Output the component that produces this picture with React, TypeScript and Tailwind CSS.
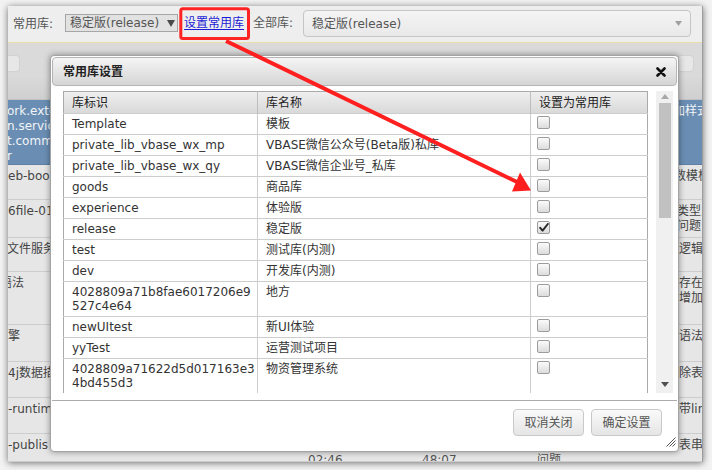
import React from "react";

type Row = { id: string[]; name: string; checked?: boolean };

const rows: Row[] = [
  { id: ["Template"], name: "模板" },
  { id: ["private_lib_vbase_wx_mp"], name: "VBASE微信公众号(Beta版)私库" },
  { id: ["private_lib_vbase_wx_qy"], name: "VBASE微信企业号_私库" },
  { id: ["goods"], name: "商品库" },
  { id: ["experience"], name: "体验版" },
  { id: ["release"], name: "稳定版", checked: true },
  { id: ["test"], name: "测试库(内测)" },
  { id: ["dev"], name: "开发库(内测)" },
  { id: ["4028809a71b8fae6017206e9", "527c4e64"], name: "地方" },
  { id: ["newUItest"], name: "新UI体验" },
  { id: ["yyTest"], name: "运营测试项目" },
  { id: ["4028809a71622d5d017163e3", "4bd455d3"], name: "物资管理系统" },
  { id: ["demo"], name: "演示库" },
];

type BgRow = {
  h: string;
  blue?: boolean;
  left: string[];
  leftShift?: string;
  right: string[];
  rightShift?: string;
  mid?: boolean;
};

const bgRows: BgRow[] = [
  { h: "h-[65px]", blue: true, left: ["ork.exte", "n.servic", "t.comm", "r"], leftShift: "ml-[-1px]", right: ["加样式"], rightShift: "ml-[-6px]" },
  { h: "h-[35px]", left: ["eb-boo"], right: ["数模板"], rightShift: "ml-[-5px]" },
  { h: "h-[38px]", left: ["6file-01"], right: ["类型,", "问题"], rightShift: "ml-[-2px]" },
  { h: "h-[34px]", left: ["文件服务"], leftShift: "ml-[-1px]", right: ["逻辑"] },
  { h: "h-[53px]", left: ["语法"], leftShift: "ml-[-8px]", right: ["存在", "增加"] },
  { h: "h-[37px]", left: ["擎"], right: ["语法"] },
  { h: "h-[36px]", left: ["4j数据描"], right: ["除表"] },
  { h: "h-[36px]", left: ["-runtim"], right: ["带lin"] },
  { h: "h-[28px]", left: ["-publis"], right: ["表串"], mid: true },
];

function Checkbox({ checked }: { checked?: boolean }) {
  return (
    <div className="mt-[-1px] ml-[-1px] w-[13px] h-[13px] rounded-[2px] border border-[#9c9c9c] bg-gradient-to-b from-[#fbfbfb] to-[#dcdcdc] flex items-center justify-center">
      {checked && (
        <svg width="10" height="9" viewBox="0 0 10 9">
          <path d="M1.2 4.8 L3.6 7.6 L8.8 1" fill="none" stroke="#2b2b2b" strokeWidth="2" strokeLinecap="round" strokeLinejoin="round" />
        </svg>
      )}
    </div>
  );
}

export default function App() {
  return (
    <div className="relative w-[712px] h-[470px] overflow-hidden bg-[#f3f3f3] pl-[8px] pt-[6px] font-['DejaVu_Sans','Noto_Sans_CJK_SC',sans-serif] text-[12px]">
      <div className="relative w-[695px] h-[456px] overflow-hidden bg-[#e6e6e6] border-r border-[#9d9d9d] shadow-[0_1px_7px_rgba(0,0,0,0.55)] flex flex-col">
        {/* toolbar */}
        <div className="h-[37px] shrink-0 bg-[#eeeeee] border-b border-[#eadfac] flex items-center pl-[5px] text-[#555] whitespace-nowrap">
          <span className="shrink-0">常用库:</span>
          <div className="ml-[12px] shrink-0 w-[113px] h-[18px] mt-[-2px] border border-[#a6a6a6] bg-[#e2e2e2] flex items-center pl-[4px] overflow-hidden">
            <span className="text-[#555] whitespace-nowrap">稳定版(release)</span>
            <svg className="ml-[8px] shrink-0" width="8" height="7" viewBox="0 0 8 7">
              <path d="M0 0 H8 L4 7 Z" fill="#4a4a4a" />
            </svg>
          </div>
          <span className="ml-[6px] mt-[-2px] shrink-0 text-[#1c1cd6] underline underline-offset-[2px]">设置常用库</span>
          <span className="ml-[9px] mt-[-2px] shrink-0">全部库:</span>
          <div className="ml-[10px] shrink-0 w-[388px] h-[27px] mt-[-1px] rounded-[4px] border border-[#c5c5c5] bg-gradient-to-b from-[#f4f4f4] to-[#e9e9e9] flex items-center justify-between pl-[8px] pr-[8px]">
            <span className="text-[#555]">稳定版(release)</span>
            <svg width="7" height="5" viewBox="0 0 7 5">
              <path d="M0 0 H7 L3.5 5 Z" fill="#a0a0a0" />
            </svg>
          </div>
        </div>
        {/* toolbar 2 */}
        <div className="h-[35px] shrink-0 bg-[#dadada] flex items-start justify-between pt-[12px]">
          <div className="w-[12px] h-[17px] rounded-r-[4px] bg-[#e7e7e7] border border-l-0 border-[#d2d2d2]" />
          <div className="w-[17px] h-[17px] mr-[8px] rounded-[4px] bg-[#e7e7e7] border border-[#d2d2d2]" />
        </div>
        {/* header */}
        <div className="h-[22px] shrink-0 bg-gradient-to-b from-[#d9d9d9] to-[#cfcfcf] border-b border-[#c3c3c3]" />
        {/* rows */}
        {bgRows.map((r, i) => (
          <div
            key={i}
            className={`${r.h} shrink-0 grid grid-cols-[42px_621px_32px] border-b ${r.blue ? "bg-[#6a8eb3] border-[#5c7fa3] text-[#f2f5f8]" : "bg-[#e6e6e6] border-[#cdcdcd] text-[#444]"}`}
          >
            <div className="overflow-hidden pt-[4px] leading-[15px] whitespace-nowrap">
              <div className={r.leftShift ?? ""}>
                {r.left.map((t, j) => (
                  <div key={j}>{t}</div>
                ))}
              </div>
            </div>
            <div className="overflow-hidden pt-[4px] leading-[15px] whitespace-nowrap text-[#555]">
              {r.mid && (
                <>
                  <div>&nbsp;</div>
                  <div className="flex">
                    <div className="w-[258px]" />
                    <div className="w-[114px]">02:46</div>
                    <div className="w-[115px]">48:07</div>
                    <div>问题</div>
                  </div>
                </>
              )}
            </div>
            <div className="overflow-hidden pt-[4px] pl-[8px] leading-[15px] whitespace-nowrap">
              <div className={r.rightShift ?? ""}>
                {r.right.map((t, j) => (
                  <div key={j}>{t}</div>
                ))}
              </div>
            </div>
          </div>
        ))}

        {/* dialog */}
        <div className="absolute left-[42px] top-[49px] w-[629px] h-[397px] bg-white border border-[#a3a3a3] rounded-[4px] shadow-[0_0_6px_rgba(0,0,0,0.4)] p-[1px] flex flex-col">
          <div className="h-[29px] shrink-0 rounded-[4px] border border-[#b5b5b5] bg-gradient-to-b from-[#f5f5f5] to-[#d5d5d5] flex items-center justify-between pl-[10px] pr-[10px]">
            <span className="font-bold text-[12px] text-[#222]">常用库设置</span>
            <svg width="10" height="10" viewBox="0 0 10 10">
              <path d="M1.5 1.5 L8.5 8.5 M8.5 1.5 L1.5 8.5" stroke="#111" strokeWidth="2.6" strokeLinecap="round" />
            </svg>
          </div>
          <div className="h-[314px] shrink-0 pl-[11px] pr-[4px] pt-[5px] flex">
            <div className="w-[593px] h-[302px] overflow-hidden">
              <table className="w-[584px] table-fixed border-collapse border border-[#a9a9a9] text-[12px] leading-[14px] text-[#333]">
                <colgroup>
                  <col className="w-[194px]" />
                  <col className="w-[273px]" />
                  <col className="w-[117px]" />
                </colgroup>
                <thead>
                  <tr className="h-[22px] bg-gradient-to-b from-[#efefef] to-[#d8d8d8] text-[#222]">
                    <th className="text-left font-normal pl-[8px] border-r border-[#bdbdbd]">库标识</th>
                    <th className="text-left font-normal pl-[8px] border-r border-[#bdbdbd]">库名称</th>
                    <th className="text-left font-normal pl-[8px]">设置为常用库</th>
                  </tr>
                </thead>
                <tbody>
                  {rows.map((r, i) => (
                    <tr key={i} className="border-t border-[#cdcdcd] align-top">
                      <td className="pl-[8px] pr-[4px] py-[3px] border-r border-[#cdcdcd] whitespace-nowrap">
                        {r.id.map((t, j) => (
                          <div key={j}>{t}</div>
                        ))}
                      </td>
                      <td className="pl-[8px] py-[3px] border-r border-[#cdcdcd] whitespace-nowrap">{r.name}</td>
                      <td className="pl-[7px] py-[3px]">
                        <Checkbox checked={r.checked} />
                      </td>
                    </tr>
                  ))}
                </tbody>
              </table>
            </div>
            <div className="w-[17px] h-[302px] bg-[#f0f0f0] flex flex-col items-center">
              <svg className="mt-[3px]" width="8" height="5" viewBox="0 0 8 5">
                <path d="M0 5 L4 0 L8 5 Z" fill="#a8a8a8" />
              </svg>
              <div className="mt-[4px] w-[12px] h-[115px] bg-[#c1c1c1]" />
              <div className="flex-1" />
              <svg className="mb-[6px]" width="8" height="5" viewBox="0 0 8 5">
                <path d="M0 0 L8 0 L4 5 Z" fill="#505050" />
              </svg>
            </div>
          </div>
          <div className="relative flex-1 border-t border-[#acacac] flex justify-end items-start gap-[7px] pt-[8px] pr-[15px]">
            <button className="w-[71px] h-[27px] rounded-[4px] border border-[#c9c9c9] bg-gradient-to-b from-[#fafafa] to-[#e5e5e5] text-[12px] text-[#555]">取消关闭</button>
            <button className="w-[71px] h-[27px] rounded-[4px] border border-[#c9c9c9] bg-gradient-to-b from-[#fafafa] to-[#e5e5e5] text-[12px] text-[#555]">确定设置</button>
            <svg className="absolute right-[1px] bottom-[3px]" width="10" height="10" viewBox="0 0 10 10">
              <path d="M9.5 0.5 L0.5 9.5 M9.5 3.5 L3.5 9.5 M9.5 6.5 L6.5 9.5" stroke="#555" strokeWidth="1" />
            </svg>
          </div>
        </div>
      </div>

      {/* annotation overlay */}
      <svg className="absolute left-0 top-0 pointer-events-none" width="712" height="470" viewBox="0 0 712 470">
        <rect x="180.8" y="8.8" width="67.7" height="29.7" rx="2" fill="none" stroke="#ff2323" strokeWidth="3" />
        <line x1="226" y1="41" x2="517" y2="182" stroke="#ff1f1f" strokeWidth="4" />
        <path d="M531 190.5 L520 172.5 L512 191.5 Z" fill="#ff1f1f" />
      </svg>
    </div>
  );
}
